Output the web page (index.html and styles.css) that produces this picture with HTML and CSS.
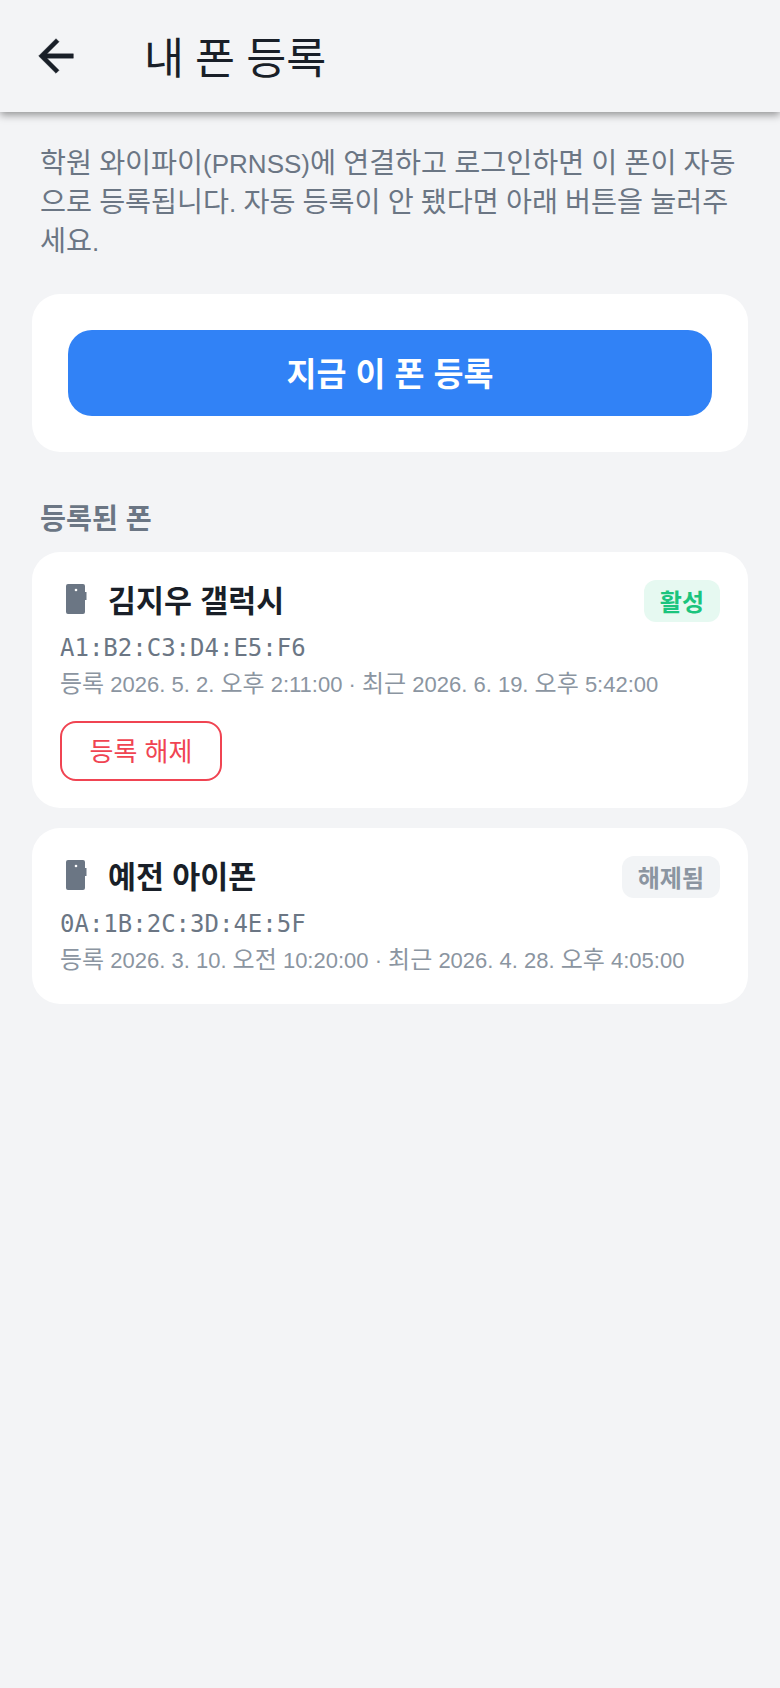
FILE: index.html
```html
<!DOCTYPE html>
<html lang="ko">
<head>
    <meta charset="UTF-8">
    <meta name="viewport" content="width=device-width, initial-scale=1.0">
    <title>내 폰 등록</title>
    <link rel="stylesheet" href="styles.css">
</head>
<body>
    <!-- 상단 바 -->
    <header class="appbar">
        <svg class="back_icon" viewBox="0 0 24 24"><path d="M20 11H7.830l5.590-5.590L12 4l-8 8 8 8 1.410-1.410L7.830 13H20v-2z"/></svg>
        <h1 class="appbar_title">내 폰 등록</h1>
    </header>

    <main class="content">
        <p class="intro">학원 와이파이<span class="latin">(PRNSS)</span>에 연결하고 로그인하면 이 폰이 자동<br>으로 등록됩니다<span class="latin">.</span> 자동 등록이 안 됐다면 아래 버튼을 눌러주<br>세요<span class="latin">.</span></p>

        <section class="card card_action">
            <button class="register_btn">지금 이 폰 등록</button>
        </section>

        <h2 class="section_title">등록된 폰</h2>

        <section class="card device">
            <div class="device_head">
                <svg class="phone_icon" viewBox="0 0 36 36"><path d="M8 1h15a2 2 0 0 1 2 2v6h1.500v8H25v12a2 2 0 0 1-2 2H8a2 2 0 0 1-2-2V3a2 2 0 0 1 2-2z"/><circle cx="16" cy="7" r="1.300" fill="#fff"/></svg>
                <span class="device_name">김지우 갤럭시</span>
                <span class="badge badge_on">활성</span>
            </div>
            <div class="device_mac">A1:B2:C3:D4:E5:F6</div>
            <div class="device_meta">등록<span class="num"> 2026. 5. 2. </span>오후<span class="num"> 2:11:00 · </span>최근<span class="num"> 2026. 6. 19. </span>오후<span class="num"> 5:42:00</span></div>
            <button class="remove_btn">등록 해제</button>
        </section>

        <section class="card device">
            <div class="device_head">
                <svg class="phone_icon" viewBox="0 0 36 36"><path d="M8 1h15a2 2 0 0 1 2 2v6h1.500v8H25v12a2 2 0 0 1-2 2H8a2 2 0 0 1-2-2V3a2 2 0 0 1 2-2z"/><circle cx="16" cy="7" r="1.300" fill="#fff"/></svg>
                <span class="device_name">예전 아이폰</span>
                <span class="badge badge_off">해제됨</span>
            </div>
            <div class="device_mac">0A:1B:2C:3D:4E:5F</div>
            <div class="device_meta">등록<span class="num"> 2026. 3. 10. </span>오전<span class="num"> 10:20:00 · </span>최근<span class="num"> 2026. 4. 28. </span>오후<span class="num"> 4:05:00</span></div>
        </section>
    </main>
</body>
</html>
```

FILE: styles.css
```css
*{
    box-sizing: border-box;
}
html,body{
    height: 100%;
}
body{
    margin: 0;
    background: #f3f4f6;
    font-family: "Liberation Sans", "Noto Sans CJK KR", sans-serif;
    color: #191f28;
}
/* 상단 바 */
.appbar{
    height: 112px;
    display: flex;
    align-items: center;
    padding-left: 30px;
    background: #f3f4f6;
    box-shadow: 0 3px 8px rgba(0,0,0,.4);
}
.back_icon{
    width: 52px;
    height: 52px;
    fill: #191f28;
    stroke: #191f28;
    stroke-width: .2;
}
.appbar_title{
    margin: 0 0 0 62px;
    padding-bottom: 2px;
    font-size: 43.500px;
    font-weight: 400;
    word-spacing: -1px;
    color: #191f28;
}
.content{
    padding: 32px;
}
.intro{
    margin: 0 8px 33px;
    font-size: 28.260px;
    line-height: 39px;
    word-spacing: -.7px;
    color: #6b7684;
}
/* 한글 글자 폭을 맞추느라 영문, 숫자만 글자 크기를 줄임 */
.latin{
    font-size: 26px;
    line-height: 1;
}
.num{
    font-size: 22px;
    line-height: 1;
}
.card{
    background: #fff;
    border-radius: 28px;
}
.card_action{
    padding: 36px;
    margin-bottom: 47px;
}
.register_btn{
    display: block;
    width: 100%;
    height: 86px;
    padding: 0 0 4px;
    border: 0;
    border-radius: 24px;
    background: #3182f6;
    color: #fff;
    font-family: inherit;
    font-size: 32.600px;
    font-weight: 700;
}
.section_title{
    margin: 0 8px 13px;
    font-size: 28.260px;
    line-height: 40px;
    font-weight: 700;
    color: #6b7684;
}
.device{
    padding: 28px 28px 27px;
    margin-bottom: 20px;
}
.device_head{
    display: flex;
    align-items: center;
    height: 42px;
}
.phone_icon{
    width: 36px;
    height: 36px;
    fill: #6b7684;
    flex: none;
}
.device_name{
    margin-left: 12px;
    padding-bottom: 4px;
    font-size: 30.400px;
    font-weight: 700;
    color: #191f28;
}
.badge{
    margin-left: auto;
    padding: 0 16px;
    height: 42px;
    line-height: 46px;
    border-radius: 12px;
    font-size: 24px;
    font-weight: 700;
}
.badge_on{
    background: #e6f9f1;
    color: #1bc47d;
}
.badge_off{
    background: #f2f4f6;
    color: #8b95a1;
}
.device_mac{
    margin-top: 8px;
    font-family: "DejaVu Sans Mono", monospace;
    font-size: 24px;
    line-height: 36px;
    color: #6b7684;
}
.device_meta{
    font-size: 24px;
    line-height: 35px;
    color: #8b95a1;
}
.remove_btn{
    display: block;
    margin-top: 20px;
    width: 162px;
    height: 60px;
    padding: 0 0 4px;
    border: 2px solid #f04452;
    border-radius: 16px;
    background: #fff;
    color: #f04452;
    font-family: inherit;
    font-size: 26px;
}
```
